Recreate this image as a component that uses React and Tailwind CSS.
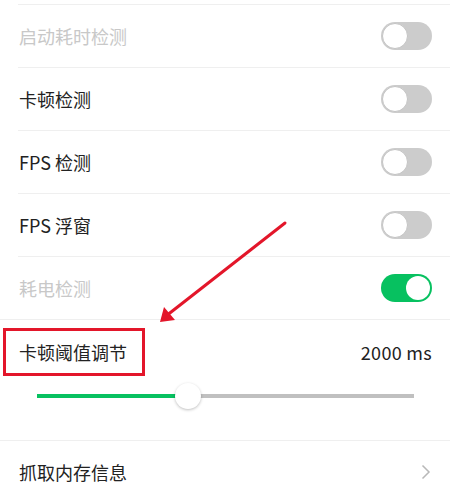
import React from "react";

const font = { fontFamily: '"Noto Sans CJK SC", "Noto Sans", sans-serif' };

function Toggle({ on }) {
  return on ? (
    <div className="relative w-[51px] h-[28px] rounded-full bg-[#07c160]">
      <div className="absolute right-[2px] top-[2px] w-[24px] h-[24px] rounded-full bg-white" />
    </div>
  ) : (
    <div className="relative w-[51px] h-[28px] rounded-full bg-[#cccccc]">
      <div className="absolute left-[1px] top-[1px] w-[26px] h-[26px] rounded-full bg-white border border-[#c4c4c4]" />
    </div>
  );
}

function Row({ label, disabled, on }) {
  return (
    <div className="pl-[18px]">
      <div className="h-[63px] border-t border-[#efefef] flex items-center justify-between pr-[18px]">
        <span className={"text-[18px] leading-[26px] pl-[1px] " + (disabled ? "text-[#c8c8c8]" : "text-[#222222]")}>
          {label}
        </span>
        <Toggle on={on} />
      </div>
    </div>
  );
}

export default function App() {
  return (
    <div className="relative w-[450px] h-[500px] bg-white overflow-hidden" style={font}>
      <div className="h-[4px]" />
      <Row label="启动耗时检测" disabled />
      <Row label="卡顿检测" />
      <Row label="FPS 检测" />
      <Row label="FPS 浮窗" />
      <Row label="耗电检测" disabled on />
      <div className="h-[121px] border-t border-[#efefef] flex flex-col pt-[19px]">
        <div className="h-[26px] flex items-center justify-between pl-[19px] pr-[18px]">
          <span className="text-[18px] leading-[26px] text-[#222222]">卡顿阈值调节</span>
          <span className="text-[18px] leading-[26px] text-[#222222] tracking-[0.3px]">2000 ms</span>
        </div>
        <div className="mt-[18px] ml-[37px] w-[377px] h-[26px] relative flex items-center">
          <div className="h-[4px] w-[139px] bg-[#07c160]" />
          <div className="h-[4px] flex-1 bg-[#c0c0c0]" />
          <div className="absolute left-[138px] top-0 w-[26px] h-[26px] rounded-full bg-white shadow-[0_1px_3px_rgba(0,0,0,0.25)]" />
        </div>
      </div>
      <div className="h-[63px] border-t border-[#efefef] flex items-center justify-between pl-[19px] pr-[19px]">
        <span className="text-[18px] leading-[26px] text-[#222222]">抓取内存信息</span>
        <svg width="10" height="16" viewBox="0 0 10 16">
          <path d="M1.5 1.5 L8 8 L1.5 14.5" fill="none" stroke="#b8b8b8" strokeWidth="1.5" />
        </svg>
      </div>

      {/* red annotation box */}
      <div className="absolute left-[3px] top-[328px] w-[142px] h-[48px] border-[3px] border-[#e3162a]" />
      {/* red arrow */}
      <svg className="absolute left-0 top-0" width="450" height="500" viewBox="0 0 450 500">
        <line x1="285" y1="223" x2="166" y2="316" stroke="#e3162a" strokeWidth="3" strokeLinecap="round" />
        <polygon points="160,322 164,307 175,320" fill="#e3162a" />
      </svg>
    </div>
  );
}
